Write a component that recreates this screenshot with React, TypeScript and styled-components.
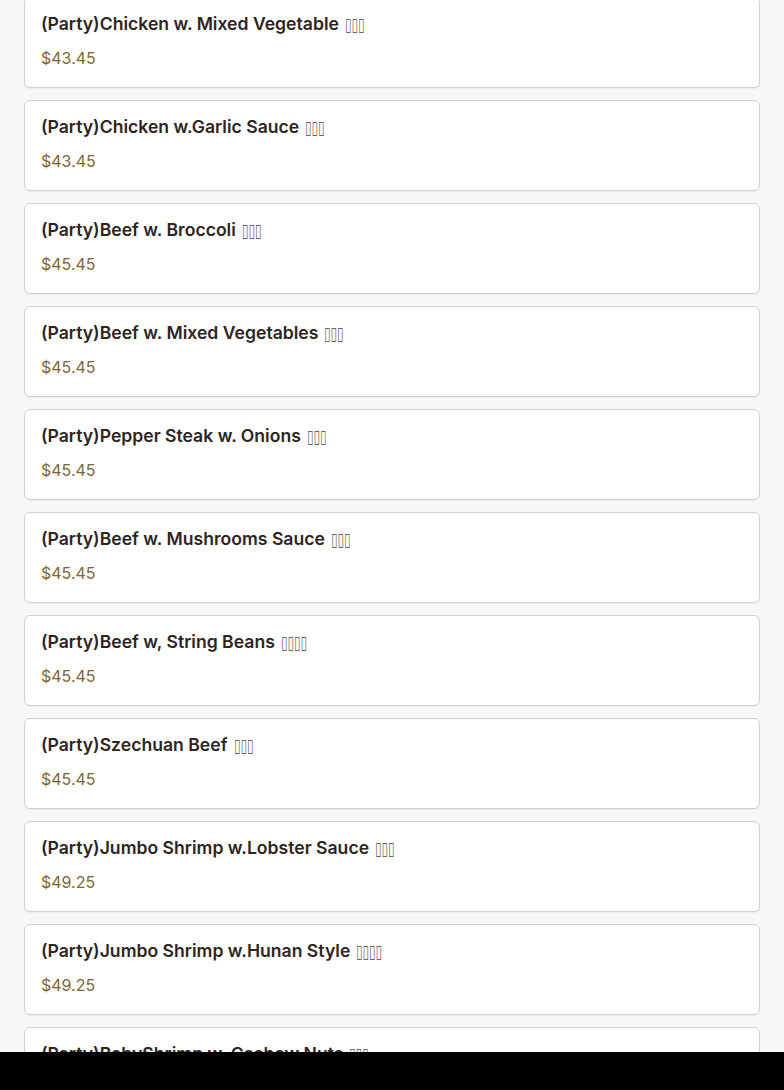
import React from "react";
import styled, { createGlobalStyle } from "styled-components";

const Global = createGlobalStyle`
  html, body { margin: 0; padding: 0; background: #f8f7f5; }
  body { font-family: "Inter", "Noto Sans", sans-serif; }
`;

const List = styled.main`
  display: flex;
  flex-direction: column;
  gap: 12px;
  padding: 0 24px 60px;
  margin-top: -3px;
`;

const Card = styled.article`
  background: #fff;
  border: 1px solid #d3d1cd;
  border-radius: 6px;
  box-shadow: 0 1px 1px rgba(0, 0, 0, 0.05);
  padding: 14px 16px 17px;
  display: flex;
  flex-direction: column;
  gap: 10px;
`;

const Title = styled.h3`
  margin: 0;
  font-size: 17.6px;
  line-height: 24px;
  font-weight: 600;
  color: #2e2522;
  white-space: nowrap;
`;

const Tofu = styled.span`
  display: inline-block;
  font-family: "DejaVu Sans", sans-serif;
  font-weight: 400;
  font-size: 19px;
  line-height: 0;
  letter-spacing: 0;
  color: #666;
  margin-left: 6px;
  transform: scaleX(0.62);
  transform-origin: left center;
  vertical-align: -1px;
`;

const Price = styled.div`
  font-size: 16px;
  line-height: 24px;
  color: #7f6632;
`;

const BottomBar = styled.div`
  position: fixed;
  left: 0;
  right: 0;
  bottom: 0;
  height: 38px;
  background: #000;
`;

const items: [string, number, number][] = [
  ["(Party)Chicken w. Mixed Vegetable", 3, 43.45],
  ["(Party)Chicken w.Garlic Sauce", 3, 43.45],
  ["(Party)Beef w. Broccoli", 3, 45.45],
  ["(Party)Beef w. Mixed Vegetables", 3, 45.45],
  ["(Party)Pepper Steak w. Onions", 3, 45.45],
  ["(Party)Beef w. Mushrooms Sauce", 3, 45.45],
  ["(Party)Beef w, String Beans", 4, 45.45],
  ["(Party)Szechuan Beef", 3, 45.45],
  ["(Party)Jumbo Shrimp w.Lobster Sauce", 3, 49.25],
  ["(Party)Jumbo Shrimp w.Hunan Style", 4, 49.25],
  ["(Party)BabyShrimp w. Cashew Nuts", 3, 49.25],
];

export default function App() {
  return (
    <>
      <Global />
      <List>
        {items.map(([name, n, price]) => (
          <Card key={name}>
            <Title>
              {name}
              <Tofu>{"▯".repeat(n)}</Tofu>
            </Title>
            <Price>${price.toFixed(2)}</Price>
          </Card>
        ))}
      </List>
      <BottomBar />
    </>
  );
}
